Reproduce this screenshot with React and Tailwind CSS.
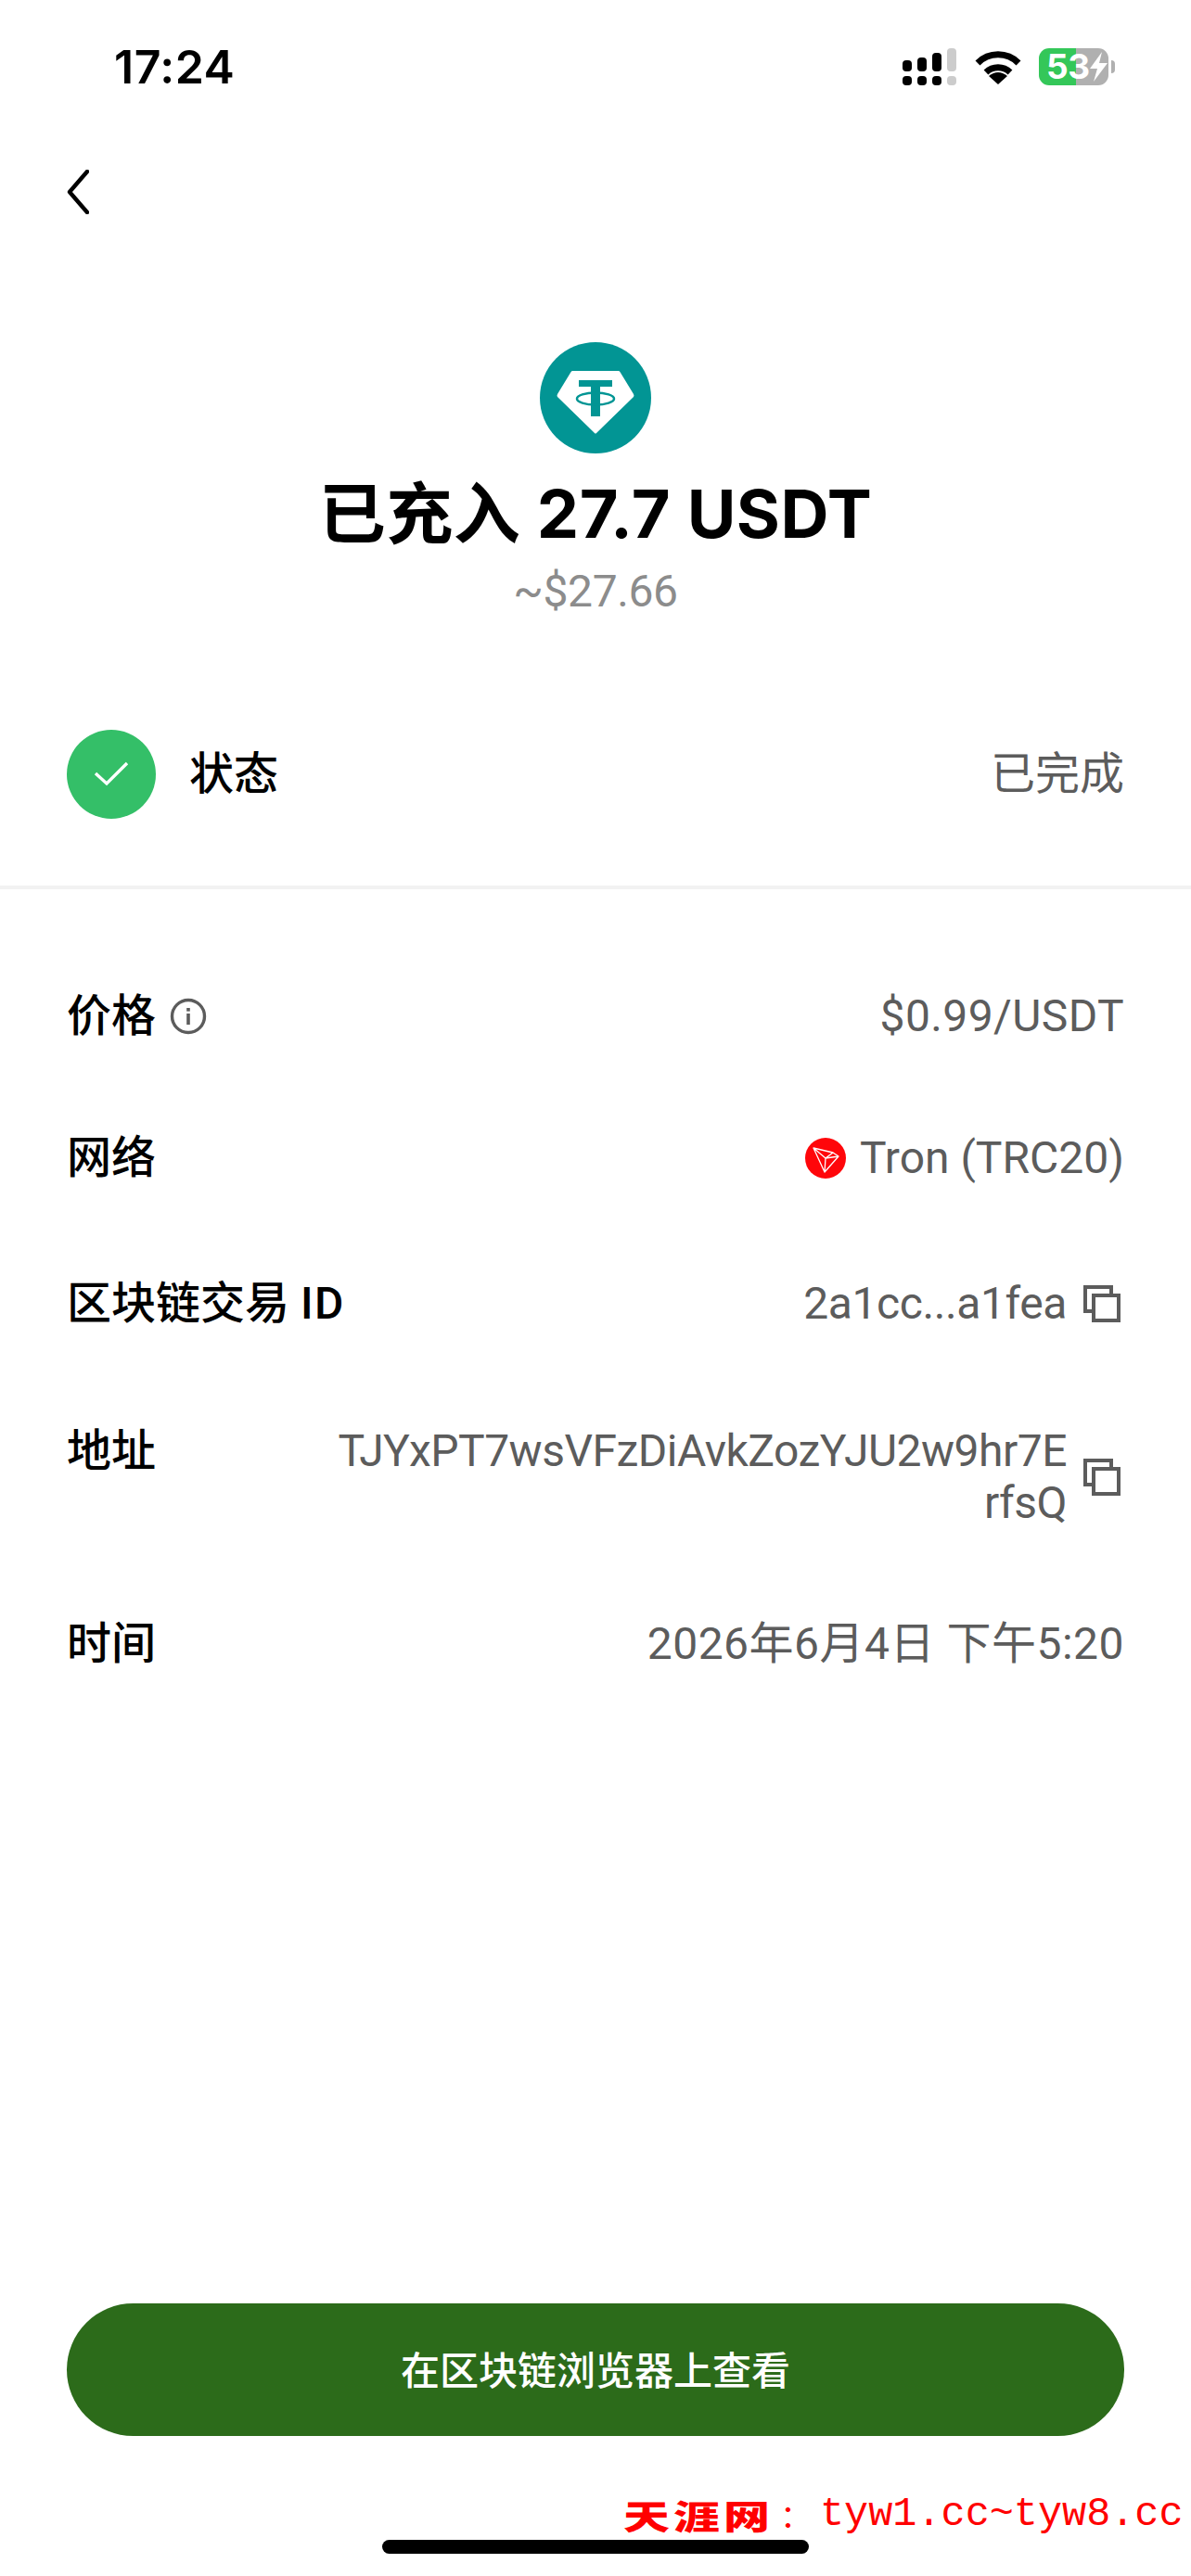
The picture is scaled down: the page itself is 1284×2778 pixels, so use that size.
function StatusBar() {
    return (
        <div className="flex h-[40px] items-center pl-[123px] pr-[82px] mt-[52px]">
            <div className="flex-1 font-['Inter','Noto_Sans_CJK_SC',sans-serif] text-[50px] leading-[40px] font-semibold tracking-[0.5px] text-black">17:24</div>
            <svg width="58" height="40" viewBox="0 0 58 40">
                <rect x="0" y="13" width="10" height="12" rx="4" fill="#000" />
                <rect x="16" y="10" width="10" height="15" rx="4" fill="#000" />
                <rect x="32" y="5" width="10" height="20" rx="4" fill="#000" />
                <rect x="48" y="0" width="10" height="25" rx="4" fill="#ccc" />
                <rect x="0" y="30" width="10" height="10" rx="4" fill="#000" />
                <rect x="16" y="30" width="10" height="10" rx="4" fill="#000" />
                <rect x="32" y="30" width="10" height="10" rx="4" fill="#000" />
                <rect x="48" y="30" width="10" height="10" rx="4" fill="#ccc" />
            </svg>
            <svg className="ml-[20px]" width="50" height="38" viewBox="0 0 50 38">
                <path d="M3 15 A 31 31 0 0 1 47 15" fill="none" stroke="#000" strokeWidth="7" />
                <path d="M12 25 A 19 19 0 0 1 38 25" fill="none" stroke="#000" strokeWidth="7" />
                <path d="M25 38 L15 29 Q25 21 35 29 Z" fill="#000" />
            </svg>
            <div className="ml-[19px] flex h-[40px] w-[75px] items-center rounded-[11px] bg-[linear-gradient(90deg,#34c759_53%,#b0b0b0_53%)] pl-[8px]">
                <span className="font-['Inter',sans-serif] text-[37px] leading-[40px] font-bold tracking-[-0.5px] text-white">53</span>
                <svg width="19" height="32" viewBox="0 0 19 32" className="shrink-0">
                    <path d="M13 0 L0 18 L8 18 L4 32 L19 12 L10 12 Z" fill="#fff" />
                </svg>
            </div>
            <div className="ml-[3px] h-[14px] w-[4px] rounded-r-full bg-[#b0b0b0]" />
        </div>
    );
}

function TetherLogo() {
    return (
        <svg width="120" height="120" viewBox="-60 -60 120 120" className="mx-auto mt-[138px]">
            <circle cx="0" cy="0" r="60" fill="#029594" />
            <path d="M-25 -29 H25 Q26 -29 27 -27 L41 -4 Q42 -2 41 -1 L1 38 Q0 39 -1 38 L-41 -1 Q-42 -2 -41 -4 L-27 -27 Q-26 -29 -25 -29 Z" fill="#fff" />
            <rect x="-18" y="-19" width="36" height="7" fill="#029594" />
            <rect x="-5" y="-12" width="10" height="32" fill="#029594" />
            <ellipse cx="0" cy="1" rx="20" ry="6.5" fill="none" stroke="#029594" strokeWidth="2.5" />
            <rect x="-5" y="-5" width="10" height="3" fill="#029594" />
        </svg>
    );
}

function TronIcon() {
    return (
        <svg width="44" height="44" viewBox="0 0 44 44" className="mr-[15px] shrink-0">
            <circle cx="22" cy="22" r="22" fill="#ff060a" />
            <path d="M9 11 L30 16 L36 20 L21 37 Z M9 11 L22 22 L21 37 M22 22 L36 20 M22 22 L30 16" fill="none" stroke="#fff" strokeWidth="1.3" strokeLinejoin="round" />
        </svg>
    );
}

function CopyIcon({ className }) {
    return (
        <svg width="40" height="40" viewBox="0 0 40 40" className={className}>
            <path d="M10 28 H2 V2 H30 V10" fill="none" stroke="#5c5c5c" strokeWidth="4" />
            <rect x="11" y="11" width="27" height="27" fill="none" stroke="#5c5c5c" strokeWidth="4" />
        </svg>
    );
}

function InfoIcon() {
    return (
        <svg width="40" height="40" viewBox="0 0 40 40" className="ml-[15px]">
            <circle cx="20" cy="20" r="17.5" fill="none" stroke="#5c5c5c" strokeWidth="3.4" />
            <rect x="18.2" y="17" width="3.6" height="12" fill="#5c5c5c" />
            <rect x="18.2" y="11" width="3.6" height="3.6" fill="#5c5c5c" />
        </svg>
    );
}

function Label({ children }) {
    return <div className="text-[48px] leading-[56px] font-medium text-black">{children}</div>;
}

function Value({ children, className }) {
    return <div className={`text-right text-[48px] leading-[56px] text-[#5c5c5c] ${className}`}>{children}</div>;
}

function App() {
    return (
        <div className="relative flex h-[2778px] w-[1284px] flex-col overflow-hidden bg-white font-['Roboto','Noto_Sans_CJK_SC',sans-serif]">
            <StatusBar />

            <svg width="24" height="48" viewBox="0 0 24 48" className="mt-[91px] ml-[72px]">
                <path d="M22 2 L3 24 L22 46" fill="none" stroke="#000" strokeWidth="4.4" strokeLinecap="round" strokeLinejoin="round" />
            </svg>

            <TetherLogo />
            <div className="mt-[23px] text-center font-['Inter','Noto_Sans_CJK_SC',sans-serif] text-[72px] leading-[84px] font-bold tracking-[0.5px] text-black">已充入 27.7 USDT</div>
            <div className="mt-[14px] text-center text-[48px] leading-[56px] tracking-[-0.4px] text-[#8c8c8c]">~$27.66</div>

            <div className="mt-[121px] flex items-center px-[72px]">
                <svg width="96" height="96" viewBox="0 0 96 96">
                    <circle cx="48" cy="48" r="48" fill="#34bf68" />
                    <path d="M31 47 L43 58 L65 36" fill="none" stroke="#fff" strokeWidth="3.4" />
                </svg>
                <div className="ml-[36px] flex-1">
                    <Label>状态</Label>
                </div>
                <Value>已完成</Value>
            </div>

            <div className="mt-[72px] h-[4px] bg-[#f2f2f2]" />

            <div className="mt-[109px] flex items-center justify-between px-[72px]">
                <div className="flex items-center">
                    <Label>价格</Label>
                    <InfoIcon />
                </div>
                <Value className="tracking-[0.4px]">$0.99/USDT</Value>
            </div>

            <div className="mt-[97px] flex items-center justify-between px-[72px]">
                <Label>网络</Label>
                <div className="flex items-center">
                    <TronIcon />
                    <Value className="tracking-[0px]">Tron (TRC20)</Value>
                </div>
            </div>

            <div className="mt-[101px] flex items-center justify-between px-[72px]">
                <Label>区块链交易 <span className="tracking-[1.5px]">ID</span></Label>
                <div className="flex items-center pr-[4px]">
                    <Value className="tracking-[-0.4px]">2a1cc...a1fea</Value>
                    <CopyIcon className="ml-[18px]" />
                </div>
            </div>

            <div className="mt-[103px] flex justify-between px-[72px]">
                <Label>地址</Label>
                <div className="flex items-center pr-[4px]">
                    <Value className="tracking-[-0.5px]">
                        <div>TJYxPT7wsVFzDiAvkZozYJU2w9hr7E</div>
                        <div>rfsQ</div>
                    </Value>
                    <CopyIcon className="ml-[18px]" />
                </div>
            </div>

            <div className="mt-[96px] flex items-center justify-between px-[72px]">
                <Label>时间</Label>
                <Value className="tracking-[0.5px]">2026年6月4日 下午5:20</Value>
            </div>

            <div className="mx-[72px] mt-auto flex h-[143px] items-center justify-center rounded-full bg-[#2c6b1a] pt-[3px] text-[42px] font-medium text-white">
                在区块链浏览器上查看
            </div>
            <div className="mx-auto mt-[112px] mb-[24px] h-[15px] w-[460px] rounded-full bg-black" />

            {/* watermark sits over the page */}
            <div className="absolute top-[2688px] left-[672px] flex items-center whitespace-nowrap text-[#ff0000]">
                <span className="origin-center scale-y-[0.72] font-['Noto_Sans_CJK_SC',sans-serif] text-[50px] leading-[48px] font-black tracking-[4px]">天涯网</span>
                <span className="ml-[7px] w-[50px] font-['Noto_Sans_CJK_SC',sans-serif] text-[34px] leading-[48px]">：</span>
                <span className="ml-[-7px] font-['Liberation_Mono',monospace] text-[43.5px] leading-[48px]">tyw1.cc~tyw8.cc</span>
            </div>
        </div>
    );
}

export default App;
